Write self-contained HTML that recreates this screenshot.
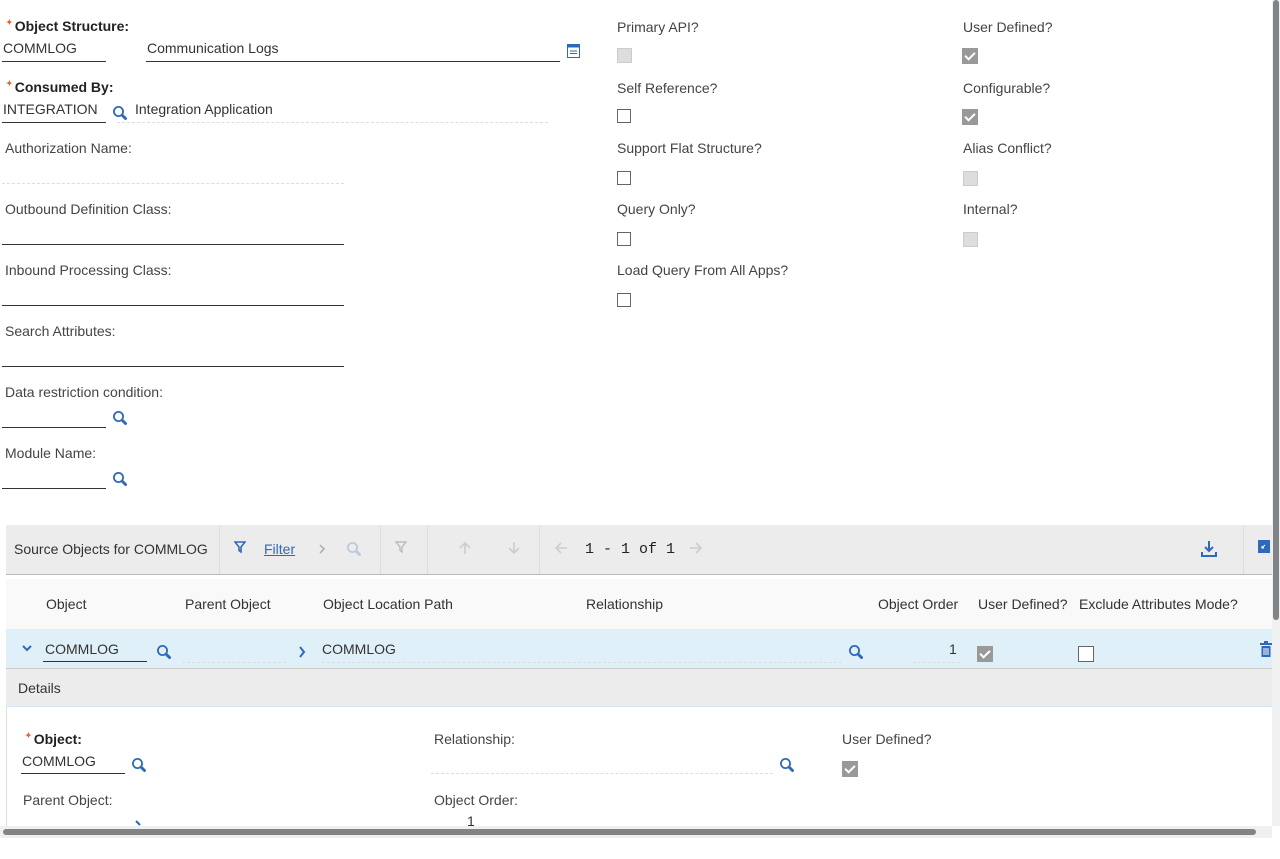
<!DOCTYPE html>
<html><head><style>
body{margin:0;width:1280px;height:859px;overflow:hidden;background:#fff;font-family:"Liberation Sans",sans-serif;font-size:14px;color:#333;position:relative}
.a{position:absolute;white-space:nowrap}
.lbl{color:#444}
.b{font-weight:bold;color:#222}
.req{color:#e8622a;font-size:8px;vertical-align:top;margin-right:2px}
.ul{position:absolute;height:0;border-bottom:1px solid #333}
.dl{position:absolute;height:0;border-bottom:1px dashed #ddd}
.cb{position:absolute;width:14px;height:14px;border:1px solid #666;background:#fff;box-sizing:border-box}
.cbd{position:absolute;width:15px;height:15px;background:#ddd;border:1px solid #ccc;box-sizing:border-box}
.cbc{position:absolute;width:16px;height:16px;background:#999;box-sizing:border-box}
.cbc:after{content:"";position:absolute;left:5px;top:2px;width:4px;height:8px;border:solid #fff;border-width:0 2px 2px 0;transform:rotate(45deg)}
.mag{position:absolute;width:16px;height:16px}
</style></head><body>
<svg width="0" height="0" style="position:absolute"><defs><symbol id="m" viewBox="0 0 16 16"><circle cx="6.5" cy="6.5" r="4.6" fill="none" stroke="#2f6ab8" stroke-width="1.8"/><path d="M11 11l2.5 2.5" stroke="#2f6ab8" stroke-width="3" stroke-linecap="round"/></symbol></defs></svg>

<div class="a b" style="left:6px;top:18px"><span class="req">✦</span>Object Structure:</div>
<div class="a" style="left:3px;top:40px">COMMLOG</div><div class="ul" style="left:2px;top:61px;width:104px"></div>
<div class="a" style="left:147px;top:40px">Communication Logs</div><div class="ul" style="left:146px;top:61px;width:414px"></div>
<svg class="a" style="left:567px;top:44px" width="13" height="14"><rect x="0.5" y="0.5" width="12" height="13" fill="#fff" stroke="#2f6ab8"/><rect x="0.5" y="0.5" width="12" height="3" fill="#2f6ab8"/><path d="M3 7h7M3 9.5h7" stroke="#2f6ab8"/></svg>

<div class="a b" style="left:6px;top:79px"><span class="req">✦</span>Consumed By:</div>
<div class="a" style="left:3px;top:101px">INTEGRATION</div><div class="ul" style="left:2px;top:122px;width:104px"></div>
<svg class="mag" style="left:112px;top:105px"><use href="#m"/></svg>
<div class="a" style="left:135px;top:101px">Integration Application</div><div class="dl" style="left:117px;top:122px;width:431px"></div>

<div class="a lbl" style="left:5px;top:140px">Authorization Name:</div><div class="dl" style="left:2px;top:183px;width:342px"></div>
<div class="a lbl" style="left:5px;top:201px">Outbound Definition Class:</div><div class="ul" style="left:2px;top:244px;width:342px"></div>
<div class="a lbl" style="left:5px;top:262px">Inbound Processing Class:</div><div class="ul" style="left:2px;top:305px;width:342px"></div>
<div class="a lbl" style="left:5px;top:323px">Search Attributes:</div><div class="ul" style="left:2px;top:366px;width:342px"></div>
<div class="a lbl" style="left:5px;top:384px">Data restriction condition:</div><div class="ul" style="left:2px;top:427px;width:104px"></div>
<svg class="mag" style="left:112px;top:410px"><use href="#m"/></svg>
<div class="a lbl" style="left:5px;top:445px">Module Name:</div><div class="ul" style="left:2px;top:488px;width:104px"></div>
<svg class="mag" style="left:112px;top:471px"><use href="#m"/></svg>

<div class="a lbl" style="left:617px;top:19px">Primary API?</div><div class="cbd" style="left:617px;top:48px"></div>
<div class="a lbl" style="left:617px;top:80px">Self Reference?</div><div class="cb" style="left:617px;top:109px"></div>
<div class="a lbl" style="left:617px;top:140px">Support Flat Structure?</div><div class="cb" style="left:617px;top:171px"></div>
<div class="a lbl" style="left:617px;top:201px">Query Only?</div><div class="cb" style="left:617px;top:232px"></div>
<div class="a lbl" style="left:617px;top:262px">Load Query From All Apps?</div><div class="cb" style="left:617px;top:293px"></div>

<div class="a lbl" style="left:963px;top:19px">User Defined?</div><div class="cbc" style="left:962px;top:48px"></div>
<div class="a lbl" style="left:963px;top:80px">Configurable?</div><div class="cbc" style="left:962px;top:109px"></div>
<div class="a lbl" style="left:963px;top:140px">Alias Conflict?</div><div class="cbd" style="left:963px;top:171px"></div>
<div class="a lbl" style="left:963px;top:201px">Internal?</div><div class="cbd" style="left:963px;top:232px"></div>

<div class="a" style="left:6px;top:525px;width:1266px;height:49px;background:#ececec;border-bottom:1px solid #bbb"></div>
<div class="a" style="left:14px;top:541px;color:#333">Source Objects for COMMLOG</div>
<div class="a" style="left:219px;top:526px;width:1px;height:48px;background:#ddd"></div>
<svg class="a" style="left:234px;top:541px" width="12" height="12"><path d="M1 1h10L7 6v5L5 9.5V6z" fill="none" stroke="#2f6ab8" stroke-width="1.6"/></svg>
<div class="a" style="left:264px;top:541px;color:#2f6ab8;text-decoration:underline">Filter</div>
<svg class="a" style="left:318px;top:544px" width="8" height="10"><path d="M2 1l4 4-4 4" fill="none" stroke="#aaa" stroke-width="1.5"/></svg>
<svg class="mag" style="left:346px;top:541px;opacity:.25"><use href="#m"/></svg>
<div class="a" style="left:380px;top:526px;width:1px;height:48px;background:#ddd"></div>
<svg class="a" style="left:395px;top:541px" width="12" height="12"><path d="M1 1h10L7 6v5L5 9.5V6z" fill="none" stroke="#bbb" stroke-width="1.4"/></svg>
<div class="a" style="left:427px;top:526px;width:1px;height:48px;background:#ddd"></div>
<svg class="a" style="left:458px;top:541px" width="14" height="14"><path d="M7 13V2M2 7l5-5 5 5" fill="none" stroke="#ccc" stroke-width="1.6"/></svg>
<svg class="a" style="left:507px;top:541px" width="14" height="14"><path d="M7 1v11M2 7l5 5 5-5" fill="none" stroke="#ccc" stroke-width="1.6"/></svg>
<div class="a" style="left:539px;top:526px;width:1px;height:48px;background:#ddd"></div>
<svg class="a" style="left:554px;top:541px" width="14" height="14"><path d="M13 7H2M7 2L2 7l5 5" fill="none" stroke="#ccc" stroke-width="1.6"/></svg>
<div class="a" style="left:585px;top:541px;font-family:'Liberation Mono',monospace;font-size:15px;color:#222">1 - 1 of 1</div>
<svg class="a" style="left:689px;top:541px" width="14" height="14"><path d="M1 7h11M7 2l5 5-5 5" fill="none" stroke="#ccc" stroke-width="1.6"/></svg>
<svg class="a" style="left:1199px;top:539px" width="20" height="20"><path d="M10 2v10M6 8l4 4 4-4M3 13v4h14v-4" fill="none" stroke="#2f6ab8" stroke-width="2"/></svg>
<div class="a" style="left:1243px;top:526px;width:1px;height:48px;background:#ddd"></div>
<svg class="a" style="left:1258px;top:540px" width="12" height="13"><rect width="12" height="13" fill="#2f6ab8"/><path d="M7 5L4 8M4 6v2h2" stroke="#fff" fill="none"/></svg>

<div class="a" style="left:6px;top:579px;width:1266px;height:50px;background:#f9f9f9"></div>
<div class="a" style="left:46px;top:596px">Object</div>
<div class="a" style="left:185px;top:596px">Parent Object</div>
<div class="a" style="left:323px;top:596px">Object Location Path</div>
<div class="a" style="left:586px;top:596px">Relationship</div>
<div class="a" style="left:878px;top:596px">Object Order</div>
<div class="a" style="left:978px;top:596px">User Defined?</div>
<div class="a" style="left:1079px;top:596px">Exclude Attributes Mode?</div>

<div class="a" style="left:6px;top:629px;width:1266px;height:39px;background:#dff0f8;border-bottom:1px solid #ccc"></div>
<svg class="a" style="left:21px;top:645px" width="12" height="8"><path d="M2 1l4 4 4-4" fill="none" stroke="#2f6ab8" stroke-width="2"/></svg>
<div class="a" style="left:45px;top:641px">COMMLOG</div><div class="ul" style="left:43px;top:661px;width:104px"></div>
<svg class="mag" style="left:156px;top:644px"><use href="#m"/></svg>
<div class="dl" style="left:182px;top:662px;width:104px"></div>
<svg class="a" style="left:298px;top:646px" width="8" height="12"><path d="M2 1l4 5-4 5" fill="none" stroke="#2f6ab8" stroke-width="2"/></svg>
<div class="a" style="left:322px;top:641px">COMMLOG</div><div class="dl" style="left:322px;top:662px;width:520px"></div>
<svg class="mag" style="left:848px;top:644px"><use href="#m"/></svg>
<div class="a" style="left:949px;top:641px">1</div><div class="dl" style="left:913px;top:662px;width:47px"></div>
<div class="cbc" style="left:977px;top:646px"></div>
<div class="cb" style="left:1078px;top:646px;width:16px;height:16px"></div>
<svg class="a" style="left:1260px;top:641px" width="12" height="16"><rect x="0" y="2" width="12" height="2" fill="#2f6ab8"/><rect x="4" y="0" width="4" height="2" fill="#2f6ab8"/><path d="M1.5 5h9v11h-9z" fill="#2f6ab8"/><path d="M4 7v7M6 7v7M8 7v7" stroke="#fff"/></svg>

<div class="a" style="left:6px;top:669px;width:1266px;height:37px;background:#ececec;border-bottom:1px solid #dbe6f4"></div>
<div class="a" style="left:18px;top:680px">Details</div>
<div class="a" style="left:6px;top:707px;width:1px;height:120px;background:#ddd"></div>

<div class="a b" style="left:25px;top:731px"><span class="req">✦</span>Object:</div>
<div class="a" style="left:22px;top:753px">COMMLOG</div><div class="ul" style="left:21px;top:773px;width:104px"></div>
<svg class="mag" style="left:131px;top:757px"><use href="#m"/></svg>
<div class="a lbl" style="left:434px;top:731px">Relationship:</div><div class="dl" style="left:431px;top:773px;width:342px"></div>
<svg class="mag" style="left:779px;top:757px"><use href="#m"/></svg>
<div class="a lbl" style="left:842px;top:731px">User Defined?</div><div class="cbc" style="left:842px;top:761px"></div>
<div class="a lbl" style="left:23px;top:792px">Parent Object:</div>
<div class="a lbl" style="left:434px;top:792px">Object Order:</div>
<div class="a" style="left:467px;top:813px">1</div>
<svg class="a" style="left:134px;top:820px" width="8" height="8"><path d="M2 1l4 4" fill="none" stroke="#2f6ab8" stroke-width="2"/></svg>

<div class="a" style="left:0;top:826px;width:1272px;height:12px;background:#f0f0f0"></div>
<div class="a" style="left:3px;top:829px;width:1253px;height:6px;background:#808486;border-radius:3px"></div>
<div class="a" style="left:1272px;top:0;width:8px;height:826px;background:#f0f0f0"></div>
<div class="a" style="left:1273px;top:0;width:6px;height:620px;background:#808486;border-radius:3px"></div>
</body></html>
